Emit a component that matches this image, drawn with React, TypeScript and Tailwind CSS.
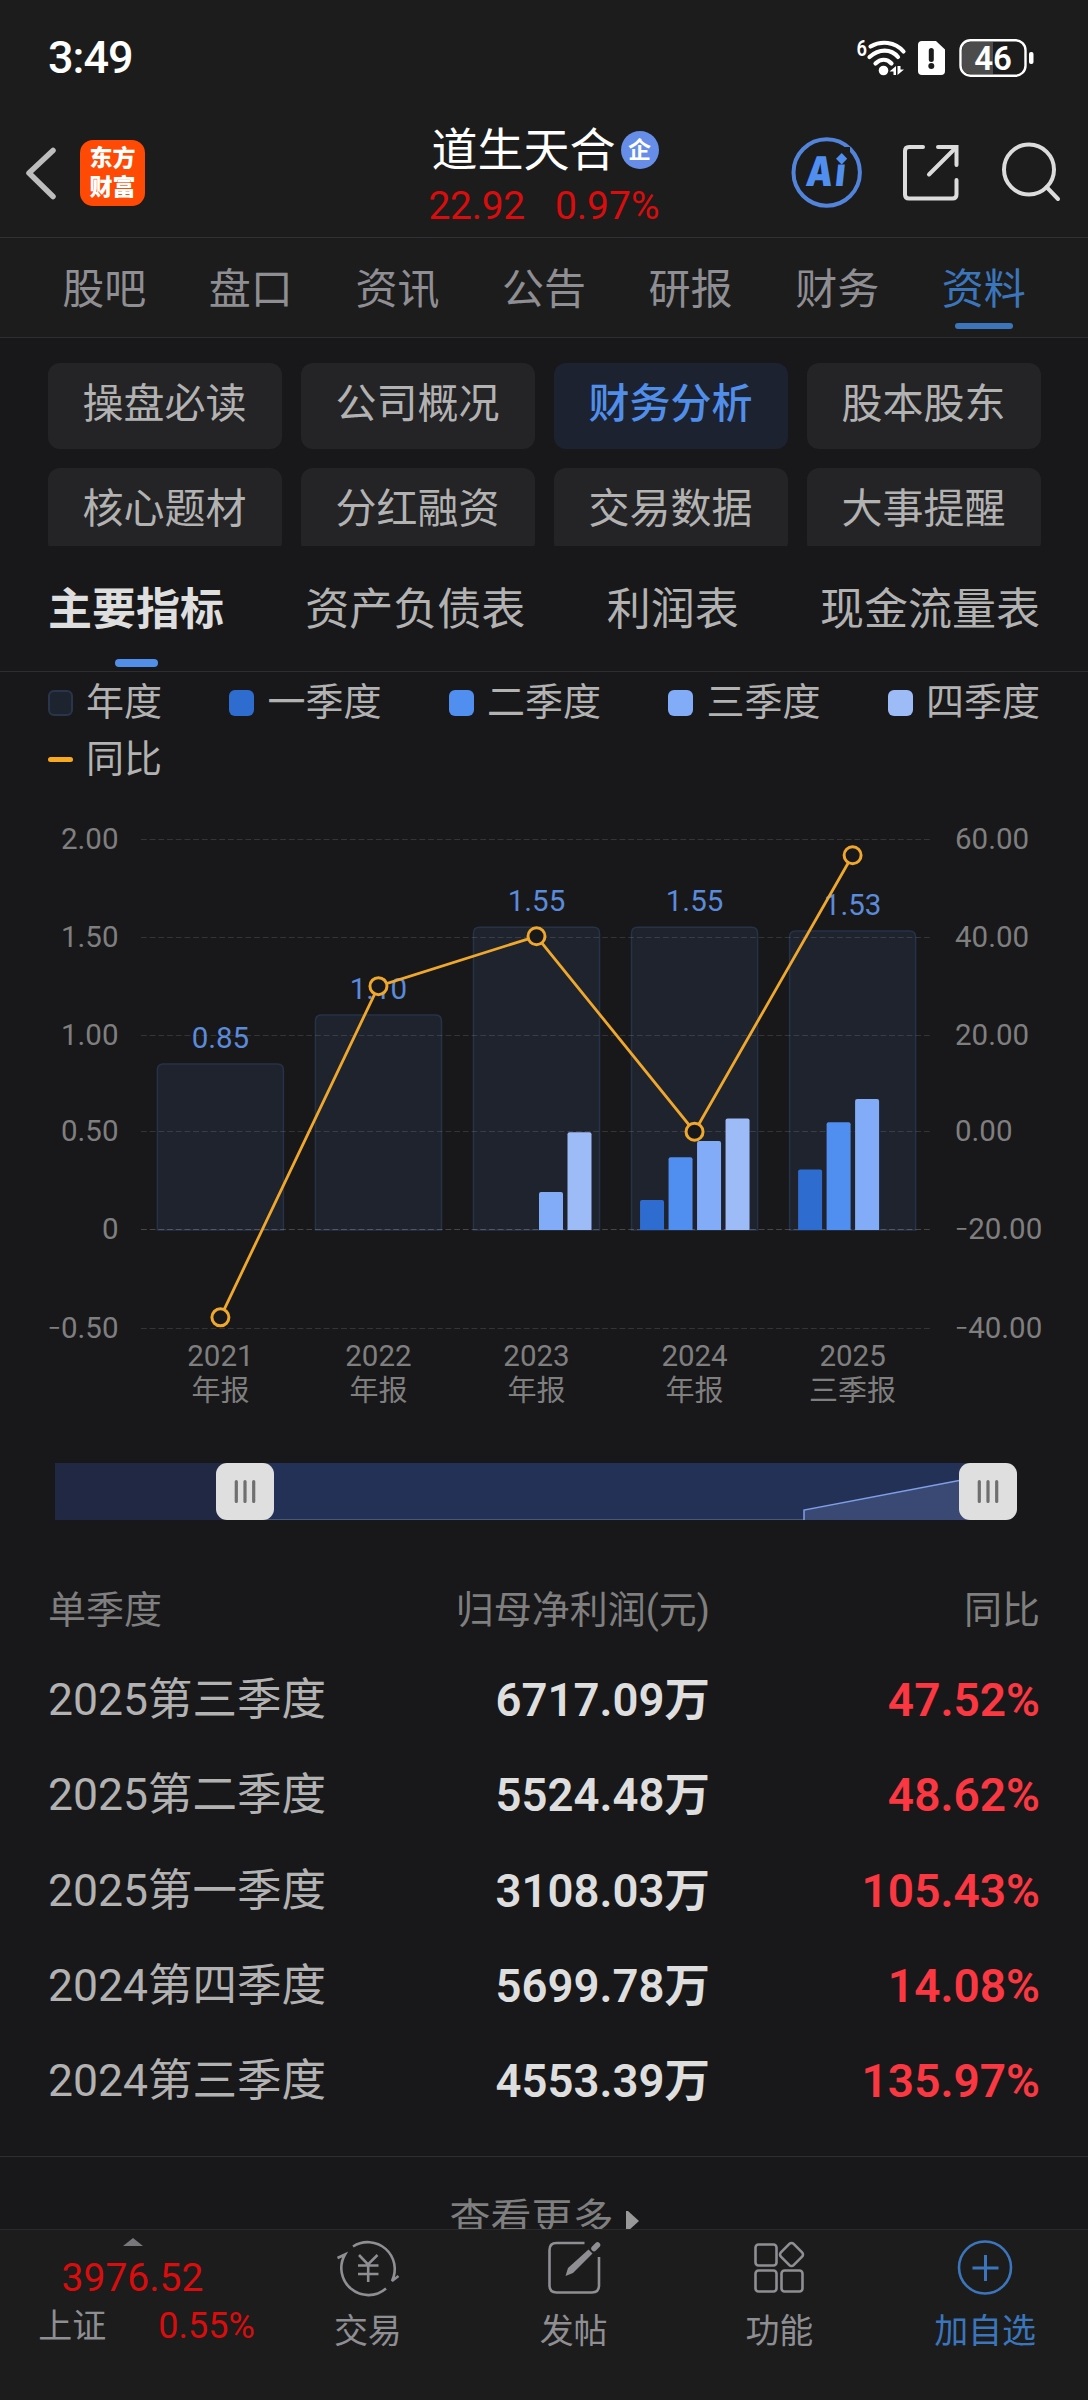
import clsx from 'clsx';

const tabs = ['股吧', '盘口', '资讯', '公告', '研报', '财务', '资料'];
const sections = ['操盘必读', '公司概况', '财务分析', '股本股东', '核心题材', '分红融资', '交易数据', '大事提醒'];
const reports = ['主要指标', '资产负债表', '利润表', '现金流量表'];

const legends = [
  { label: '年度', color: 'bg-[#1e242f] border-2 border-[#29354a]' },
  { label: '一季度', color: 'bg-[#2f6cd0]' },
  { label: '二季度', color: 'bg-[#508eef]' },
  { label: '三季度', color: 'bg-[#82acf8]' },
  { label: '四季度', color: 'bg-[#9dbbf7]' },
];

const quarterColors = ['#2f6cd0', '#508eef', '#82acf8', '#9dbbf7'];

const years = [
  { year: '2021', report: '年报', total: 0.85, rate: -38, quarters: [0, 0, 0, 0] },
  { year: '2022', report: '年报', total: 1.1, rate: 29.8, quarters: [0, 0, 0, 0] },
  { year: '2023', report: '年报', total: 1.55, rate: 40, quarters: [0, 0, 0.195, 0.5] },
  { year: '2024', report: '年报', total: 1.55, rate: 0, quarters: [0.153, 0.372, 0.455, 0.57] },
  { year: '2025', report: '三季报', total: 1.53, rate: 56.6, quarters: [0.31, 0.552, 0.671, 0] },
];

const grid = [
  { y: 49.5, left: '2.00', right: '60.00' },
  { y: 147.5, left: '1.50', right: '40.00' },
  { y: 245.5, left: '1.00', right: '20.00' },
  { y: 341.5, left: '0.50', right: '0.00' },
  { y: 439.5, left: '0', right: '−20.00' },
  { y: 538.5, left: '−0.50', right: '−40.00' },
];

const rows = [
  ['2025第三季度', '6717.09万', '47.52%'],
  ['2025第二季度', '5524.48万', '48.62%'],
  ['2025第一季度', '3108.03万', '105.43%'],
  ['2024第四季度', '5699.78万', '14.08%'],
  ['2024第三季度', '4553.39万', '135.97%'],
];

const centerX = (i: number) => 220.4 + i * 158.05;
const valueY = (v: number) => 440 - v * 195.4;
const rateY = (p: number) => 341.7 - p * 4.885;

function StatusBar() {
  return (
    <div className="h-[113px] pl-12 pr-[54px] pt-[2px] flex items-center justify-between">
      <span className="text-[45px] font-medium tracking-[-1px] text-white">3:49</span>
      <svg width="178" height="40" viewBox="856 36 178 40" fill="none">
        <text x="856.500" y="53.500" fill="#fff" fontSize="22" fontWeight="600" textLength="10.500" lengthAdjust="spacingAndGlyphs">6</text>
        <g stroke="#fff" strokeWidth="4.200" strokeLinecap="round">
          <path d="M870.500 44.500C881 38.500 895 39.500 903.500 49.500" />
          <path d="M869.500 55C879 46.500 891 46.500 898 55" />
          <path d="M875.500 61.500C880.500 56.500 887 56.500 891.500 61.500" />
        </g>
        <circle cx="883.500" cy="68.500" r="4.800" fill="#fff" />
        <path d="M889.500 69.500L896 64V73H893.500V69.500ZM897.500 64V73L904 67.500H900.500V64Z" fill="#fff" />
        <path d="M922 39H936L945 47.500V69Q945 73 941 73H922Q918 73 918 69V43Q918 39 922 39Z" fill="#fff" />
        <path d="M931.300 48.500V57.500" stroke="#1c1c1c" strokeWidth="5" strokeLinecap="round" />
        <circle cx="931.300" cy="64" r="3" fill="#1c1c1c" />
        <path d="M993 40H971Q962 40 962 49V63Q962 72 971 72H993Z" fill="#4c4c4c" />
        <rect x="960.500" y="38.200" width="65" height="35.500" rx="10" stroke="#fff" strokeWidth="2.400" />
        <rect x="1029" y="50" width="4.500" height="12" rx="2" fill="#fff" />
        <text x="993" y="68" fill="#fff" fontSize="33" fontWeight="600" textAnchor="middle">46</text>
      </svg>
    </div>
  );
}

function Header() {
  return (
    <header className="h-[125px] flex justify-between border-b border-[#313133]">
      <div className="w-[380px] pl-[24px] pt-[27px] flex items-start gap-[22px]">
        <svg width="34" height="66" viewBox="0 0 34 66" fill="none">
          <path d="M29 10.500L5 33L29 56.500" stroke="#bdbdbd" strokeWidth="5.500" strokeLinecap="round" strokeLinejoin="round" />
        </svg>
        <div className="w-[65px] h-[66px] rounded-[13px] bg-[#ff4a05] flex flex-col items-center justify-center text-[23px] leading-[29px] font-black text-white">
          <span>东方</span>
          <span>财富</span>
        </div>
      </div>
      <div className="w-[240px] pt-2 flex flex-col items-center">
        <h1 className="pl-[2px] flex items-center text-[46px] leading-[58px] text-white">
          道生天合
          <span className="w-[38px] h-[38px] ml-[5px] rounded-full bg-[#668ee8] flex items-center justify-center text-[23px] leading-none font-bold">企</span>
        </h1>
        <p className="flex gap-[30px] text-[39px] leading-[54px] text-[#d90d0d] whitespace-nowrap">
          <span className="tracking-[-0.300px]">22.92</span>
          <span>0.97%</span>
        </p>
      </div>
      <div className="w-[380px] pr-[26px] pt-[23px] flex items-start justify-end">
        <svg width="272" height="74" viewBox="790 136 272 74" fill="none">
          <circle cx="826.700" cy="172.500" r="33.200" stroke="#5284dc" strokeWidth="4" />
          <text transform="translate(805 186) skewX(-6) scale(0.82 1)" fill="#508eef" fontSize="41" fontWeight="900" letterSpacing="3" fontFamily="Inter">Ai</text>
          <rect x="832" y="147" width="18" height="17.500" fill="#1c1c1c" />
          <path d="M841.700 153L847.200 158.700L841.700 164.500L836 158.700Z" fill="#508eef" />
          <g stroke="#dcdcdc" strokeWidth="4" strokeLinecap="round">
            <path d="M923 147H909Q905 147 905 151V194.500Q905 198.500 909 198.500H952.500Q956.500 198.500 956.500 194.500V180" />
            <path d="M938 147H956.500V165" />
            <path d="M955 148.500L929 174.500" />
            <circle cx="1029" cy="169.500" r="25" />
            <path d="M1046.500 187L1058 199" />
          </g>
        </svg>
      </div>
    </header>
  );
}

function AxisLabel({ value }: { value: string }) {
  if (!value.startsWith('−')) return value;
  return (
    <>
      <tspan fontSize="23" dy="-2">−</tspan>
      <tspan dy="2">{value.slice(1)}</tspan>
    </>
  );
}

function Chart() {
  return (
    <svg className="block" width="1088" height="740" viewBox="0 0 1088 740" fill="none">
      {years.map(({ year, total }, i) => {
        const x = centerX(i);
        const y = valueY(total);
        return (
          <path
            key={year}
            d={`M${x - 63} 440V${y + 6}Q${x - 63} ${y} ${x - 57} ${y}H${x + 57}Q${x + 63} ${y} ${x + 63} ${y + 6}V440Z`}
            fill="#1e232e"
            stroke="#263248"
            strokeWidth="1.500"
          />
        );
      })}
      {grid.map(({ y, left, right }) => (
        <g key={y} fontSize="29.500" fill="#7f7f7f">
          <line x1="141" x2="932" y1={y} y2={y} stroke="#fff" strokeOpacity={y === 439.5 ? 0.2 : 0.12} strokeDasharray="5.800 2.900" />
          <text x="118.500" y={y + 9.8} textAnchor="end"><AxisLabel value={left} /></text>
          <text x="955" y={y + 9.8}><AxisLabel value={right} /></text>
        </g>
      ))}
      {years.map(({ year, quarters }, i) =>
        quarters.map((q, n) => {
          if (!q) return null;
          const x = centerX(i) - 54.5 + n * 28.5;
          const y = valueY(q);
          return <path key={year + n} d={`M${x} 440V${y + 2}Q${x} ${y} ${x + 2} ${y}H${x + 22}Q${x + 24} ${y} ${x + 24} ${y + 2}V440Z`} fill={quarterColors[n]} />;
        }),
      )}
      {years.map(({ year, report, total }, i) => (
        <g key={year} textAnchor="middle">
          <text x={centerX(i)} y={valueY(total) - 16} fontSize="29.500" fill="#5b8bdb">{total.toFixed(2)}</text>
          <text x={centerX(i)} y="576" fontSize="29.500" fill="#7f7f7f">{year}</text>
          <text x={centerX(i)} y="611" fontSize="29" fill="#7f7f7f">{report}</text>
        </g>
      ))}
      <polyline points={years.map(({ rate }, i) => `${centerX(i)},${rateY(rate)}`).join(' ')} stroke="#f0a82c" strokeWidth="2.800" />
      {years.map(({ year, rate }, i) => (
        <circle key={year} cx={centerX(i)} cy={rateY(rate)} r="8.500" fill="#18181a" stroke="#f0a82c" strokeWidth="3" />
      ))}

      {/* zoom slider */}
      <rect x="55" y="673" width="190" height="57" fill="#202843" />
      <rect x="245" y="673" width="743" height="57" fill="#243156" />
      <path d="M804 730V720L988 685V730Z" fill="#394973" />
      <path d="M245 729.500H804" stroke="#4a5877" />
      <path d="M804 730V720L988 685" stroke="#7f9fe6" strokeWidth="1.500" />
      {[245, 988].map((x) => (
        <g key={x}>
          <rect x={x - 29} y="673" width="58" height="57" rx="11" fill="#dfdfdf" />
          <path d={`M${x - 8.7} 691.500V711.500M${x} 691.500V711.500M${x + 8.7} 691.500V711.500`} stroke="#6f6f6f" strokeWidth="3.200" strokeLinecap="round" />
        </g>
      ))}
    </svg>
  );
}

function BottomBar() {
  return (
    <footer className="h-[171px] flex bg-[#1c1c1c] border-t border-[#29292b] text-[34px] leading-[44px] text-[#8e8e93]">
      <div className="w-[265px] pt-2 flex flex-col items-center">
        <svg width="20" height="8" viewBox="0 0 20 8">
          <path d="M0 8L10 0L20 8Z" fill="#77777c" />
        </svg>
        <span className="mt-[10px] text-[39px] text-[#d90d0d]">3976.52</span>
        <p className="mt-1 pl-7 flex gap-[52px]">
          <span>上证</span>
          <span className="text-[36px] text-[#d90d0d]">0.55%</span>
        </p>
      </div>
      <div className="flex-1 pt-[7px] flex flex-col items-center gap-3">
        <svg width="66" height="60" viewBox="335 2237 66 60" fill="none" stroke="#8e8e93" strokeWidth="2.600">
          <path d="M353 2246.500A27 27 0 0 1 392 2281L398.500 2276" />
          <path d="M386 2288.500A27 27 0 0 1 345 2254.500L337.500 2258" />
          <path d="M359 2255L368 2264.500L377.500 2255M358 2265.500H378.500M358 2274H378.500M368.200 2265V2282" />
        </svg>
        <span>交易</span>
      </div>
      <div className="flex-1 pt-[7px] flex flex-col items-center gap-3">
        <svg width="60" height="60" viewBox="543.500 2237 60 60" fill="none">
          <path d="M584 2243H556Q549 2243 549 2250V2285.500Q549 2292.500 556 2292.500H591.500Q598.500 2292.500 598.500 2285.500V2257" stroke="#8e8e93" strokeWidth="2.600" />
          <path d="M565 2276L567.500 2268L588 2249.500L592 2253.500L572.500 2273Z" fill="#8e8e93" />
          <path d="M593.500 2248.500L597 2245" stroke="#8e8e93" strokeWidth="5.500" strokeLinecap="round" />
        </svg>
        <span>发帖</span>
      </div>
      <div className="flex-1 pt-[7px] flex flex-col items-center gap-3">
        <svg width="60" height="60" viewBox="749 2237 60 60" fill="none" stroke="#8e8e93" strokeWidth="2.600">
          <rect x="755.500" y="2244.500" width="21" height="21" rx="3" />
          <rect x="755.500" y="2270.500" width="21" height="21" rx="3" />
          <rect x="781.500" y="2270.500" width="21" height="21" rx="3" />
          <rect x="782.500" y="2245.500" width="18" height="18" rx="3" transform="rotate(45 791.500 2254.500)" />
        </svg>
        <span>功能</span>
      </div>
      <div className="flex-1 pt-[7px] flex flex-col items-center gap-3 text-[#3b76bd]">
        <svg width="60" height="60" viewBox="0 0 60 60" fill="none" stroke="#3b76bd" strokeWidth="2.600">
          <circle cx="30" cy="30.500" r="26" />
          <path d="M17.500 31H43.500M30.500 18V44" strokeWidth="3" />
        </svg>
        <span>加自选</span>
      </div>
    </footer>
  );
}

export default function App() {
  return (
    <main className="w-[1088px] h-[2400px] flex flex-col overflow-hidden bg-[#18181a] font-[Roboto,'Noto_Sans_CJK_SC',sans-serif]">
      <div className="bg-[#1c1c1c]">
        <StatusBar />
        <Header />
        <nav className="h-[100px] px-[31px] flex border-b border-[#2e2e30] text-[42px] leading-[84px] text-[#8e8e93]">
          {tabs.map((tab, i) => (
            <div key={tab} className={clsx('flex-1 flex flex-col items-center pt-[10px]', i === 6 && 'text-[#3b76bd]')}>
              <span className="h-[75px]">{tab}</span>
              {i === 6 && <span className="w-[58px] h-[6px] rounded-full bg-[#3b76bd]" />}
            </div>
          ))}
        </nav>
      </div>

      <div className="h-[208px] px-[47.500px] pt-[25px] grid grid-cols-4 gap-x-[19px] gap-y-[19px] content-start overflow-hidden">
        {sections.map((item) => (
          <div
            key={item}
            className={clsx(
              'h-[86px] rounded-xl text-[41px] leading-[82px] text-center',
              item === '财务分析' ? 'bg-[#1c2230] text-[#508eea] font-medium' : 'bg-[#242426] text-[#b2b2b2]',
            )}
          >
            {item}
          </div>
        ))}
      </div>

      <nav className="h-[126px] px-12 flex justify-between border-b border-[#2e2e30] text-[44px] leading-[64px] text-[#b2b2b2]">
        {reports.map((item, i) => (
          <div key={item} className={clsx('pt-[32px] flex flex-col items-center gap-[17px]', i === 0 && 'font-bold text-[#dedede]')}>
            <span>{item}</span>
            {i === 0 && <span className="w-[43px] h-2 rounded-full bg-[#508eea]" />}
          </div>
        ))}
      </nav>

      <div className="h-[118px] px-12 pt-[2px] text-[38px] leading-[57px] text-[#b2b2b2]">
        <div className="flex justify-between">
          {legends.map(({ label, color }) => (
            <div key={label} className="flex items-center gap-[13px]">
              <span className={clsx('w-[25px] h-[26px] rounded-[6px]', color)} />
              {label}
            </div>
          ))}
        </div>
        <div className="flex items-center gap-[13px]">
          <span className="w-[25px] h-[5px] rounded-full bg-[#f9a91e]" />
          同比
        </div>
      </div>

      <Chart />

      <div className="h-[626px] px-12 pt-[52px]">
        <div className="h-[57px] flex text-[38px] leading-[57px] text-[#7f7f7f]">
          <span className="w-[300px]">单季度</span>
          <span className="w-[362px] text-right">归母净利润(元)</span>
          <span className="flex-1 text-right">同比</span>
        </div>
        <div className="mt-[14px]">
          {rows.map(([quarter, profit, rate]) => (
            <div key={quarter} className="h-[95.300px] flex text-[44.500px] leading-[95px] text-[#b2b2b2]">
              <span className="w-[300px]">{quarter}</span>
              <span className="w-[362px] text-right text-[45.500px] font-semibold text-[#dedede]">{profit}</span>
              <span className="flex-1 text-right text-[46px] font-semibold text-[#fb3742]">{rate}</span>
            </div>
          ))}
        </div>
      </div>
      <div className="h-[73px] pt-[32px] flex justify-center gap-3 border-t border-[#2e2e30] overflow-hidden text-[41px] leading-[60px] text-[#7f7f7f]">
        查看更多
        <svg className="mt-[22px]" width="13" height="22" viewBox="0 0 13 22">
          <path d="M0 0H2L13 10L2 20H0Z" fill="#999" />
        </svg>
      </div>
      <BottomBar />
    </main>
  );
}
